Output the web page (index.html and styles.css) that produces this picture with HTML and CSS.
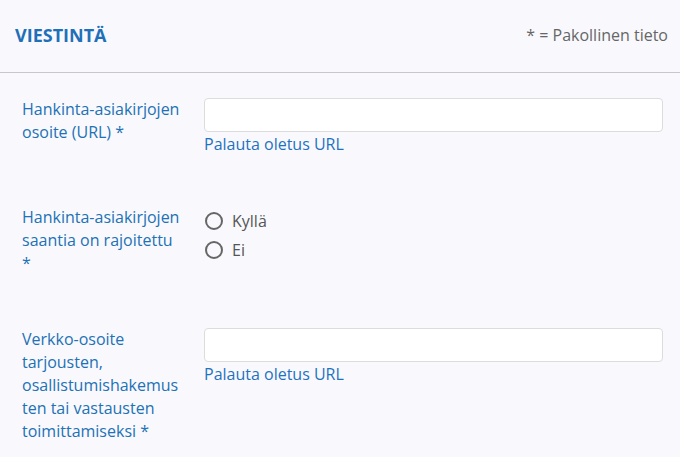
FILE: index.html
```html
<!DOCTYPE html>
<html lang="fi">
<head>
<meta charset="utf-8">
<link rel="stylesheet" href="styles.css">
</head>
<body>
<div class="panel">
  <div class="header">
    <h2 class="title">VIESTINTÄ</h2>
    <span class="required-note">* = Pakollinen tieto</span>
  </div>
  <div class="body">
    <div class="row row-1">
      <label class="label">Hankinta-asiakirjojen osoite (URL) *</label>
      <div class="field">
        <input class="input" type="text">
        <a class="link" href="#">Palauta oletus URL</a>
      </div>
    </div>
    <div class="row row-2">
      <label class="label">Hankinta-asiakirjojen saantia on rajoitettu *</label>
      <div class="field radios">
        <label class="radio"><span class="circle"></span><span class="radio-text">Kyllä</span></label>
        <label class="radio"><span class="circle"></span><span class="radio-text">Ei</span></label>
      </div>
    </div>
    <div class="row row-3">
      <label class="label">Verkko-osoite tarjousten, osallistumishakemusten tai vastausten toimittamiseksi *</label>
      <div class="field">
        <input class="input" type="text">
        <a class="link" href="#">Palauta oletus URL</a>
      </div>
    </div>
  </div>
</div>
</body>
</html>
```

FILE: styles.css
```css
html, body {
  margin: 0;
  padding: 0;
  background: #f9f9fd;
}
body {
  font-family: "Open Sans", "Liberation Sans", sans-serif;
  color: #555;
  width: 680px;
  height: 457px;
  overflow: hidden;
}
.header {
  height: 73px;
  box-sizing: border-box;
  border-bottom: 1px solid #c8c8cc;
  display: flex;
  align-items: center;
  justify-content: space-between;
  padding: 0 12px 2px 15px;
}
.title {
  margin: 0;
  font-size: 18px;
  font-weight: 700;
  color: #1f70b8;
}
.required-note {
  font-size: 16px;
  color: #666;
}
.body {
  padding: 25px 17px 0 22px;
}
.row {
  display: flex;
  gap: 22px;
  box-sizing: border-box;
}
.row-1 { height: 108px; }
.row-2 { height: 122px; }
.label {
  width: 160px;
  flex: none;
  font-size: 16px;
  line-height: 23px;
  color: #2271b5;
  overflow-wrap: break-word;
}
.field {
  flex: 1;
  display: flex;
  flex-direction: column;
}
.input {
  height: 34px;
  box-sizing: border-box;
  border: 1px solid #dcdcdf;
  border-radius: 4px;
  background: #fff;
  margin: 0;
  width: 100%;
}
.link {
  color: #1f72c0;
  text-decoration: none;
  font-size: 16px;
  line-height: 24px;
}
.radio {
  display: flex;
  align-items: center;
  height: 29px;
  font-size: 16px;
  color: #555;
}
.circle {
  width: 14px;
  height: 14px;
  border: 2px solid #666;
  border-radius: 50%;
  margin-left: 1px;
  margin-right: 9px;
  box-sizing: content-box;
}
```
